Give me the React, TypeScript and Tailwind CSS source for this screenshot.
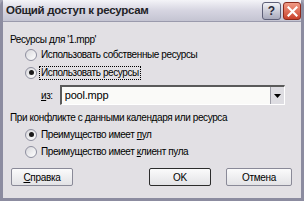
import React from "react";

const font = { fontFamily: '"Liberation Sans", Arial, sans-serif' };

function Radio({ checked }: { checked?: boolean }) {
  return (
    <span className="relative inline-flex w-[12px] h-[12px] rounded-full border border-[#8e8f9f] bg-gradient-to-br from-[#d8d8dc] to-white items-center justify-center shrink-0">
      {checked && <span className="w-[5px] h-[5px] rounded-full bg-[#1a1a1a]" />}
    </span>
  );
}

function Btn({ children, def }: { children: React.ReactNode; def?: boolean }) {
  return (
    <div
      className={`h-[18px] flex items-center justify-center text-[10px] tracking-[-0.3px] text-black bg-gradient-to-b from-[#fbfbfb] to-[#e3e3e6] rounded-[2px] ${
        def ? "border border-[#2c2c2c]" : "border border-[#8a8a98]"
      }`}
    >
      {children}
    </div>
  );
}

export default function App() {
  return (
    <div
      className="w-[304px] h-[201px] bg-[#a6a6b6] overflow-hidden text-black"
      style={font}
    >
      <div className="w-full h-full flex flex-col border-x-[3px] border-b-[3px] border-[#8c8ca0] rounded-t-[6px] bg-[#e2e0e4]">
        {/* title bar */}
        <div className="h-[22px] flex items-center justify-between pl-[3px] pr-[0px] bg-gradient-to-b from-[#f4f4f8] via-[#d6d5e1] to-[#c4c4d2] border-b border-[#9a9aac]">
          <span className="text-[11.5px] font-bold text-[#222226] tracking-[-0.3px]">
            Общий доступ к ресурсам
          </span>
          <div className="flex gap-[2px] pt-[1px]">
            <div className="w-[19px] h-[18px] rounded-[3px] border border-[#5e6078] bg-gradient-to-b from-[#f2f2f6] to-[#a8aabc] flex items-center justify-center text-[12px] font-bold text-[#2a2a3a]">
              ?
            </div>
            <div className="w-[18px] h-[18px] rounded-[3px] border border-[#8c2a1c] bg-gradient-to-b from-[#f09a86] to-[#c8402a] flex items-center justify-center">
              <svg width="11" height="11" viewBox="0 0 11 11">
                <path d="M1.5 1.5 L9.5 9.5 M9.5 1.5 L1.5 9.5" stroke="white" strokeWidth="2.2" strokeLinecap="square" />
              </svg>
            </div>
          </div>
        </div>
        {/* body */}
        <div className="flex-1 flex flex-col pl-[7px] pr-[9px] text-[10px] leading-[13px] tracking-[-0.4px]">
          <div className="mt-[11px] h-[13px]">Ресурсы для '1.mpp'</div>
          <div className="flex flex-col gap-[5px] mt-[2px] pl-[15px]">
            <div className="flex items-center gap-[4px] h-[13px]">
              <Radio />
              <span>Использовать собственные ресурсы</span>
            </div>
            <div className="flex items-center gap-[3px] h-[13px]">
              <Radio checked />
              <span className="outline outline-1 outline-dotted outline-black px-[1px] leading-[12px]">
                Использовать ресурсы
              </span>
            </div>
          </div>
          <div className="flex items-center mt-[6px] pl-[31px] pr-[7px] gap-[7px]">
            <span>
              <u>и</u>з:
            </span>
            <div className="flex-1 h-[20px] flex items-center bg-[#fafaf8] border-t-2 border-l-2 border-[#5a5a5a] border-r border-b border-r-[#ffffff] border-b-[#ffffff]">
              <span className="flex-1 pl-[3px] text-[11px] tracking-[-0.2px]">pool.mpp</span>
              <div className="w-[14px] h-[17px] bg-[#dedde2] border-l border-[#9c9ca6] flex items-center justify-center">
                <svg width="7" height="4" viewBox="0 0 7 4">
                  <path d="M0 0 H7 L3.5 4 Z" fill="black" />
                </svg>
              </div>
            </div>
          </div>
          <div className="mt-[6px] h-[13px]">При конфликте с данными календаря или ресурса</div>
          <div className="flex flex-col gap-[4px] mt-[4px] pl-[15px]">
            <div className="flex items-center gap-[4px] h-[13px]">
              <Radio checked />
              <span>
                Преимущество имеет <u>п</u>ул
              </span>
            </div>
            <div className="flex items-center gap-[4px] h-[13px]">
              <Radio />
              <span>
                Преимущество имеет <u>к</u>лиент пула
              </span>
            </div>
          </div>
          <div className="flex items-center mt-[10px] pl-[1px]">
            <div className="w-[62px]">
              <Btn>
                <span>
                  <u>С</u>правка
                </span>
              </Btn>
            </div>
            <div className="flex-1" />
            <div className="w-[62px]">
              <Btn def>OK</Btn>
            </div>
            <div className="w-[15px]" />
            <div className="w-[66px]">
              <Btn>Отмена</Btn>
            </div>
          </div>
        </div>
      </div>
    </div>
  );
}
